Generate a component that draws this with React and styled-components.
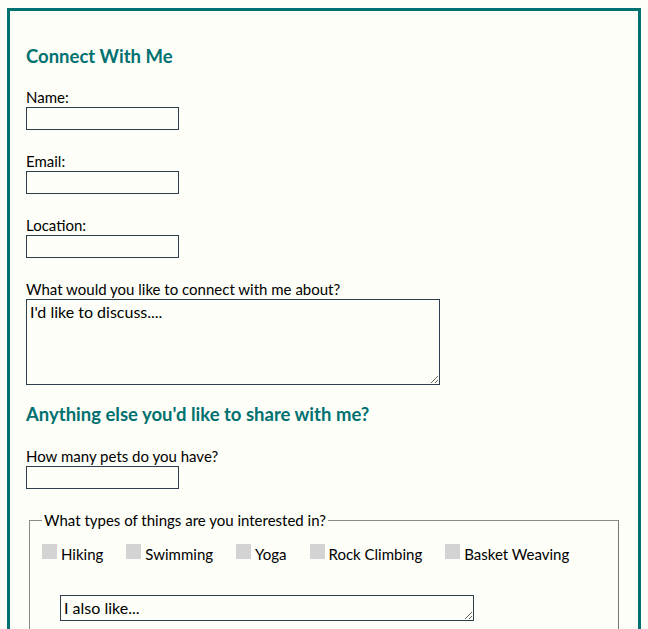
import React from "react";
import styled, { createGlobalStyle } from "styled-components";

const teal = "#007170";
const ink = "#2e3e4c";

const Global = createGlobalStyle`
  html, body { background: #fdfef7; }
  body {
    margin: 8px 7px;
    font-family: Lato, "Open Sans", sans-serif;
    font-size: 15px;
    color: #000;
  }
`;

const Card = styled.div`
  border: 3px solid ${teal};
  padding: 23px 17px 40px 16px;
  height: 640px;
  box-sizing: border-box;
`;

const Heading = styled.h2`
  color: ${teal};
  font-size: 18.5px;
  font-weight: 700;
  margin: ${(p) => p.$m || "10px 0 20px"};
  line-height: 24px;
`;

const Field = styled.div`
  margin-bottom: ${(p) => p.$mb ?? 22}px;
`;

const Label = styled.label`
  display: block;
  line-height: 19px;
`;

const TextInput = styled.input`
  display: block;
  box-sizing: border-box;
  width: 153px;
  height: 23px;
  border: 1px solid ${ink};
  background: transparent;
  margin: 0;
  font: inherit;
`;

const Area = styled.textarea`
  display: block;
  box-sizing: border-box;
  width: ${(p) => p.$w}px;
  height: ${(p) => p.$h}px;
  border: 1px solid ${ink};
  background: transparent;
  font: inherit;
  font-size: 16px;
  color: #000;
  padding: 2px 3px;
  margin: ${(p) => p.$m || "0"};
  line-height: 19px;
`;

const Fieldset = styled.fieldset`
  margin: 8px 2px 0 3px;
  padding: 4px 12px 10px;
  border: 1px solid #8a8a8a;
  border-right-color: #777;
`;

const Legend = styled.legend`
  padding: 0 2px;
  line-height: 19px;
`;

const Options = styled.div`
  display: flex;
  gap: 23px;
  margin-top: 11px;
  align-items: center;
`;

const Option = styled.label`
  display: flex;
  align-items: center;
  gap: 4px;
`;

const Box = styled.input.attrs({ type: "checkbox" })`
  appearance: none;
  margin: 0;
  width: 15px;
  height: 15px;
  background: #d3d3d3;
  position: relative;
  top: -3px;
`;

export default function App() {
  return (
    <>
      <Global />
      <Card>
        <Heading>Connect With Me</Heading>
        <Field>
          <Label>Name:</Label>
          <TextInput />
        </Field>
        <Field>
          <Label>Email:</Label>
          <TextInput />
        </Field>
        <Field>
          <Label>Location:</Label>
          <TextInput />
        </Field>
        <Field $mb={17}>
          <Label>What would you like to connect with me about?</Label>
          <Area $w={414} $h={86} defaultValue="I'd like to discuss...." />
        </Field>
        <Heading $m="0 0 21px">Anything else you'd like to share with me?</Heading>
        <Field>
          <Label>How many pets do you have?</Label>
          <TextInput />
        </Field>
        <Fieldset>
          <Legend>What types of things are you interested in?</Legend>
          <Options>
            <Option><Box />Hiking</Option>
            <Option><Box />Swimming</Option>
            <Option><Box />Yoga</Option>
            <Option><Box />Rock Climbing</Option>
            <Option><Box />Basket Weaving</Option>
          </Options>
          <Area $w={414} $h={26} $m="32px 0 0 18px" defaultValue="I also like..." />
        </Fieldset>
      </Card>
    </>
  );
}
